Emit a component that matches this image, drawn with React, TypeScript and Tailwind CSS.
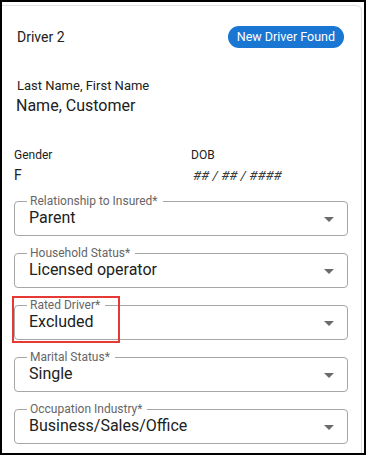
import React from "react";

function Arrow() {
  return (
    <svg width="24" height="24" viewBox="0 0 24 24" className="shrink-0">
      <path d="M7 10l5 5 5-5z" fill="#6b6b6b" />
    </svg>
  );
}

function Field({ label, value, highlight }: { label: string; value: string; highlight?: boolean }) {
  return (
    <div className="relative h-[35px] rounded-[4px] border border-[#a6a6a6] flex items-start pl-[14px] pr-[6px]">
      <span className="absolute left-[12px] top-[-8px] bg-white pl-[3px] pr-[5px] text-[12px] leading-[14px] text-[#666666]">
        {label}
      </span>
      <span className="flex-1 pt-[6px] text-[16px] leading-[19px] text-[#212121]">{value}</span>
      <div className="self-center">
        <Arrow />
      </div>
      {highlight && (
        <div className="absolute left-[-3px] top-[-10px] w-[108px] h-[47px] border-2 border-[#e53935]" />
      )}
    </div>
  );
}

export default function App() {
  return (
    <div className="w-[366px] h-[455px] border-2 border-black bg-white overflow-hidden font-['Roboto',sans-serif]">
      <div className="mt-[3px] w-[360px] h-[470px] border border-l-0 border-[#e0e0e0] rounded-tr-[6px]">
        <div className="flex items-center justify-between h-[42px] pt-[20px] pl-[15px] pr-[17px]">
          <span className="text-[14px] leading-[17px] text-[#212121]">Driver 2</span>
          <span className="h-[22px] flex items-center rounded-full bg-[#1976d2] px-[9px] text-[12.5px] text-white">
            New Driver Found
          </span>
        </div>
        <div className="pl-[15px] mt-[30px]">
          <div className="text-[13px] leading-[15px] text-[#212121]">Last Name, First Name</div>
          <div className="mt-[3px] text-[16px] leading-[19px] text-[#212121] -ml-[1px]">Name, Customer</div>
        </div>
        <div className="mt-[33px] pl-[12px] grid grid-cols-[177px_1fr]">
          <div>
            <div className="text-[12px] leading-[14px] text-[#212121]">Gender</div>
            <div className="mt-[5px] text-[14px] leading-[16px] text-[#212121]">F</div>
          </div>
          <div>
            <div className="text-[12px] leading-[14px] text-[#212121]">DOB</div>
            <div className="mt-[5px] text-[13.5px] leading-[16px] italic text-[#3a3a3a] pl-[2px]">## / ## / ####</div>
          </div>
        </div>
        <div className="mt-[18px] ml-[12px] mr-[13px] flex flex-col gap-[17px]">
          <Field label="Relationship to Insured*" value="Parent" />
          <Field label="Household Status*" value="Licensed operator" />
          <Field label="Rated Driver*" value="Excluded" highlight />
          <Field label="Marital Status*" value="Single" />
          <Field label="Occupation Industry*" value="Business/Sales/Office" />
        </div>
      </div>
    </div>
  );
}
